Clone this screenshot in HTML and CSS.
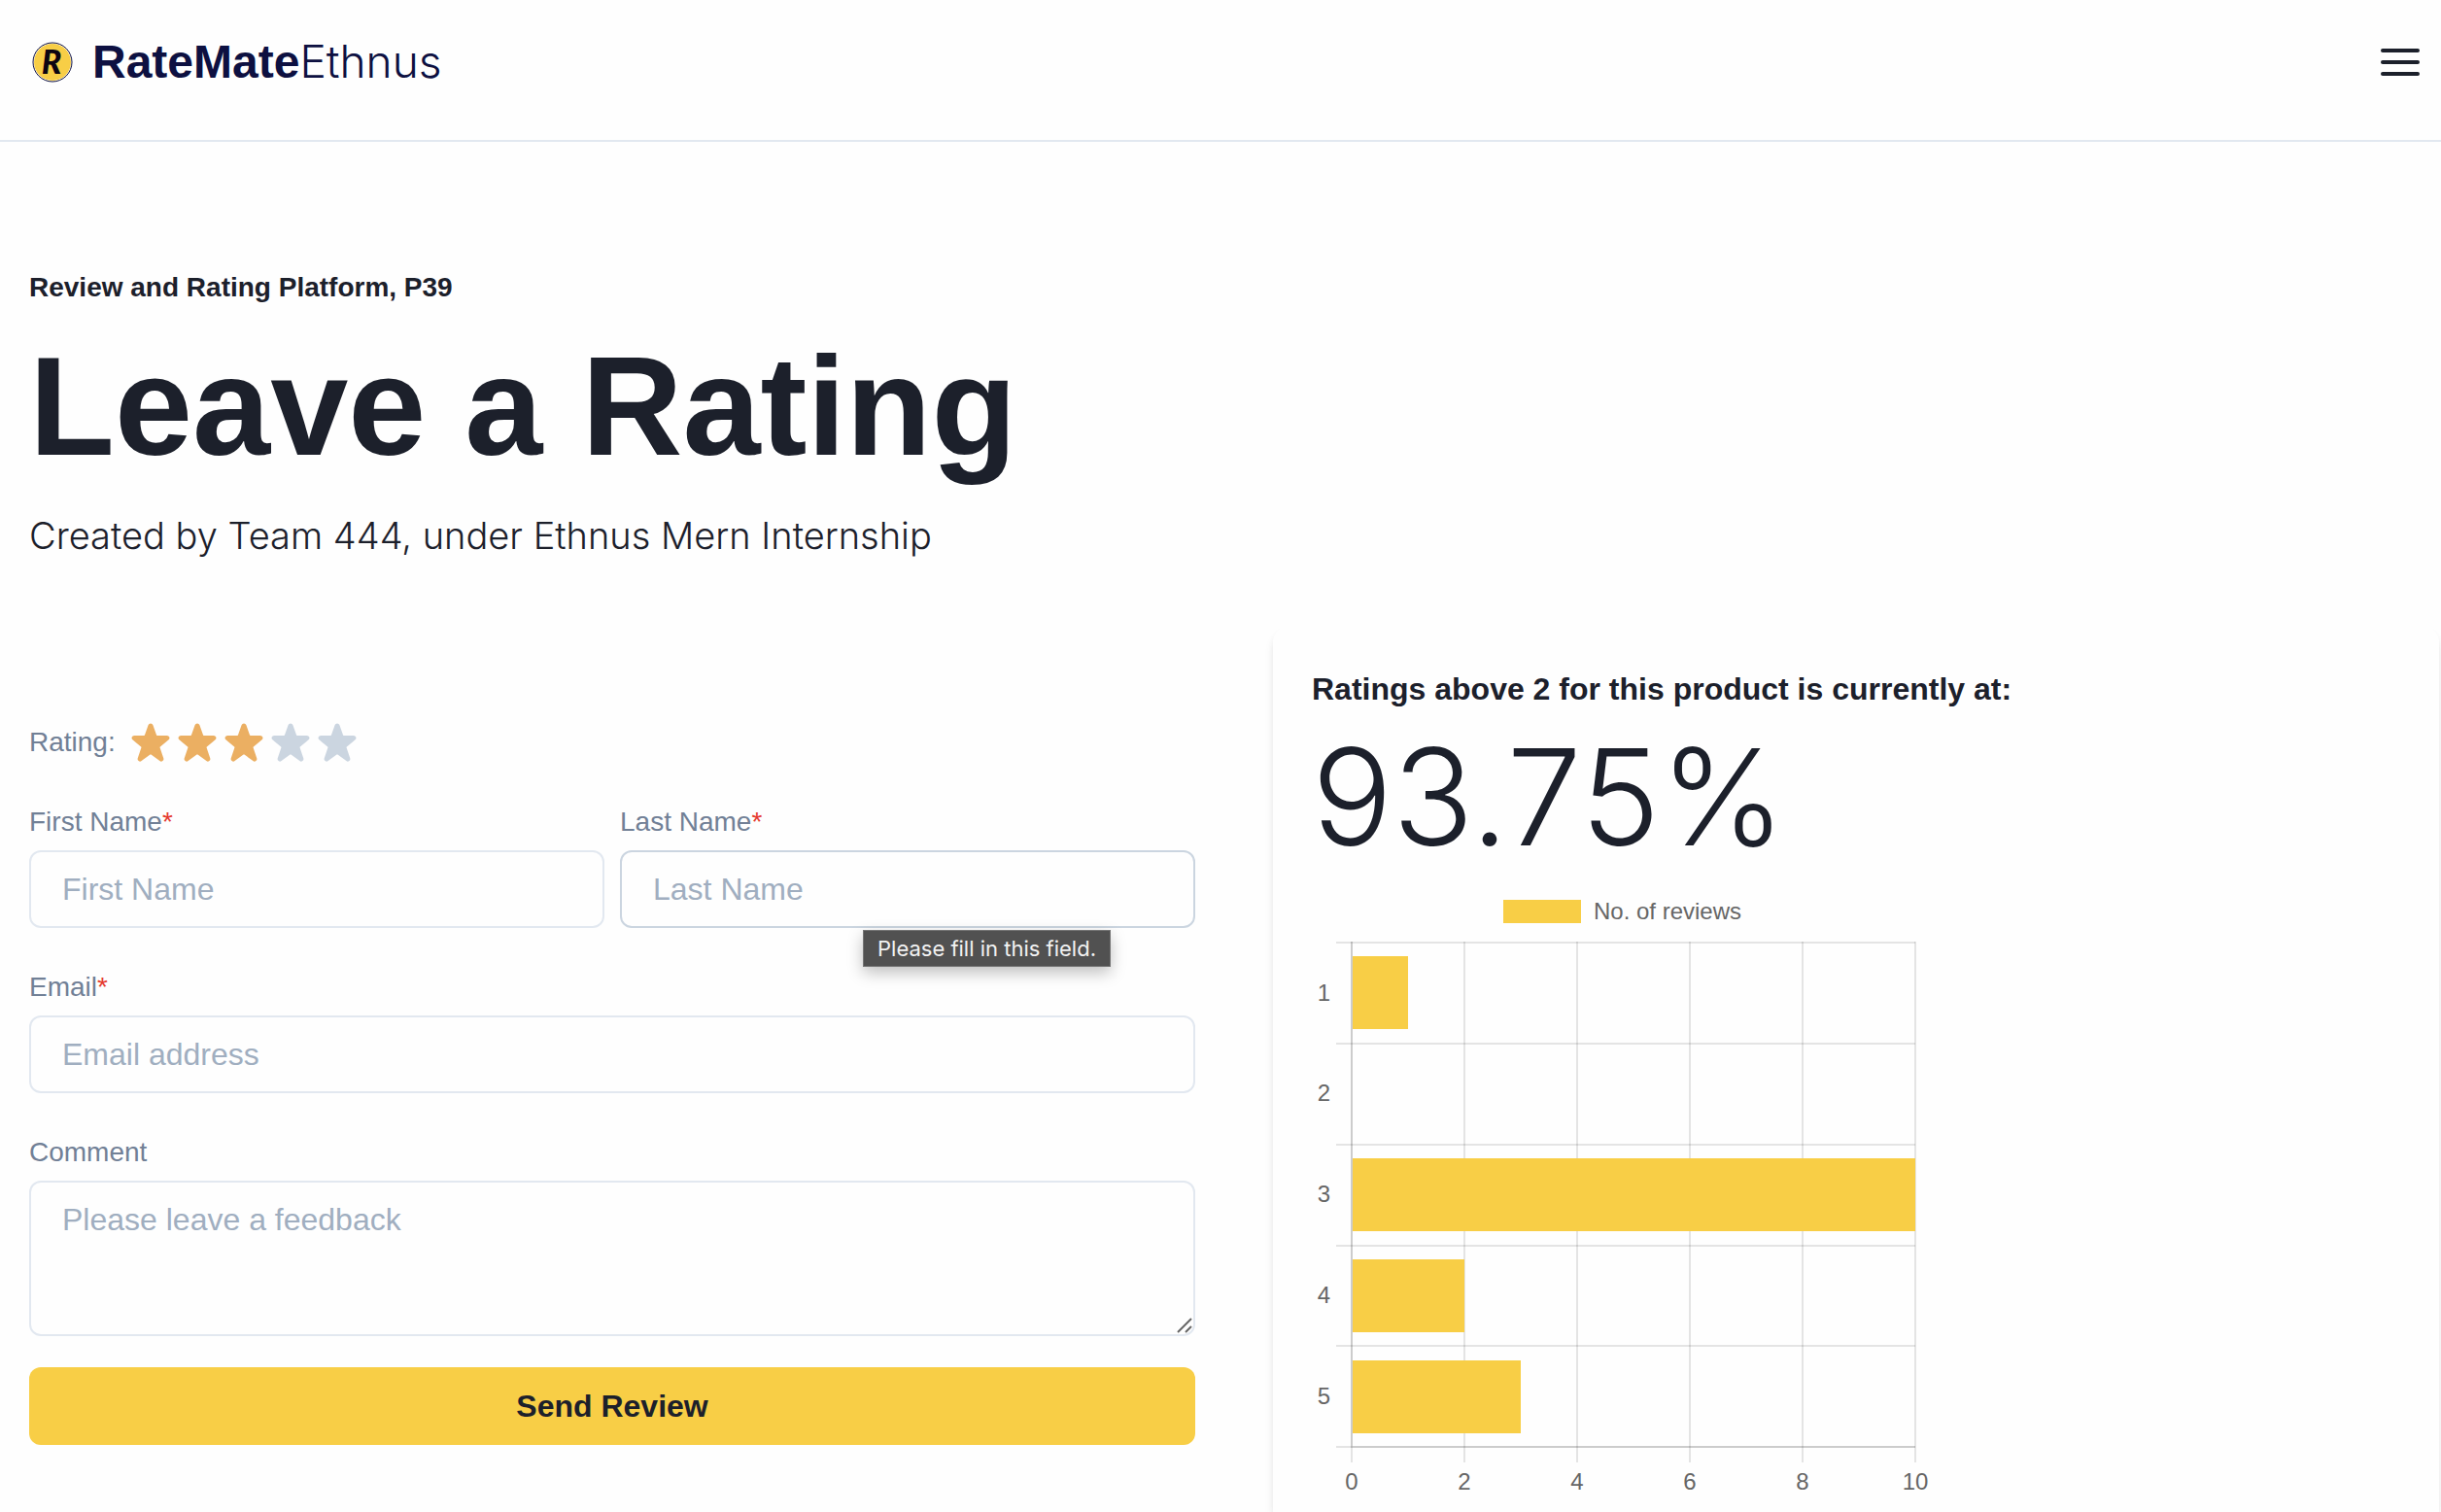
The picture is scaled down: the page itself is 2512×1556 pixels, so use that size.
FILE: index.html
```html
<!DOCTYPE html>
<html lang="en">
<head>
<meta charset="utf-8">
<title>RateMate Ethnus</title>
<meta name="viewport" content="width=device-width, initial-scale=1">
<link rel="stylesheet" href="styles.css">
</head>
<body>
<header class="site-header">
  <a class="brand" href="#">
    <svg class="brand-mark" viewBox="0 0 42 42" aria-hidden="true">
      <circle class="brand-disc" cx="21" cy="21" r="19"/>
      <circle class="brand-ring" cx="21" cy="21" r="20"/>
      <text class="brand-letter" x="20" y="33" text-anchor="middle">R</text>
    </svg>
    <span class="brand-name"><b>RateMate</b><span class="light">Ethnus</span></span>
  </a>
  <button class="menu-button" type="button" aria-label="Open menu">
    <svg viewBox="0 0 40 28" aria-hidden="true">
      <rect width="40" height="4" rx="2"/>
      <rect y="12" width="40" height="4" rx="2"/>
      <rect y="24" width="40" height="4" rx="2"/>
    </svg>
  </button>
</header>

<main>
  <section class="hero">
    <p class="eyebrow">Review and Rating Platform, P39</p>
    <h1>Leave a Rating</h1>
    <p class="tagline light">Created by Team 444, under Ethnus Mern Internship</p>
  </section>

  <div class="columns">
    <form class="review-form">
      <svg class="sprite" aria-hidden="true">
        <symbol id="star" viewBox="0 0 24 24">
          <path d="M23.555,8.729a1.505,1.505,0,0,0-1.406-.98H16.062a.5.5,0,0,1-.472-.334L13.405,1.222a1.5,1.5,0,0,0-2.81,0l-.005.016L8.41,7.415a.5.5,0,0,1-.471.334H1.85A1.5,1.5,0,0,0,.887,10.4l5.184,4.3a.5.5,0,0,1,.155.543L4.048,21.774a1.5,1.5,0,0,0,2.31,1.684l5.346-3.92a.5.5,0,0,1,.591,0l5.344,3.919a1.5,1.5,0,0,0,2.312-1.683l-2.178-6.535a.5.5,0,0,1,.155-.543l5.194-4.306A1.5,1.5,0,0,0,23.555,8.729Z"/>
        </symbol>
      </svg>
      <div class="rating" role="radiogroup" aria-labelledby="rating-label">
        <span class="label" id="rating-label">Rating:</span>
        <div class="stars">
          <label class="star on"><input type="radio" name="rating" value="1" aria-label="1 star"><svg><use href="#star"/></svg></label>
          <label class="star on"><input type="radio" name="rating" value="2" aria-label="2 stars"><svg><use href="#star"/></svg></label>
          <label class="star on"><input type="radio" name="rating" value="3" aria-label="3 stars" checked><svg><use href="#star"/></svg></label>
          <label class="star"><input type="radio" name="rating" value="4" aria-label="4 stars"><svg><use href="#star"/></svg></label>
          <label class="star"><input type="radio" name="rating" value="5" aria-label="5 stars"><svg><use href="#star"/></svg></label>
        </div>
      </div>

      <div class="name-row">
        <div class="field">
          <label class="label" for="first">First Name<span class="required">*</span></label>
          <input class="control" id="first" type="text" placeholder="First Name" required>
        </div>
        <div class="field">
          <label class="label" for="last">Last Name<span class="required">*</span></label>
          <input class="control hovered" id="last" type="text" placeholder="Last Name" required>
          <span class="tooltip" role="tooltip">Please fill in this field.</span>
        </div>
      </div>

      <div class="field">
        <label class="label" for="email">Email<span class="required">*</span></label>
        <input class="control" id="email" type="email" placeholder="Email address" required>
      </div>

      <div class="field">
        <label class="label" for="comment">Comment</label>
        <textarea class="control" id="comment" placeholder="Please leave a feedback"></textarea>
        <svg class="grip" viewBox="0 0 16 16" aria-hidden="true"><path d="M1 15 15 1M9 15 15 9"/></svg>
      </div>

      <button class="submit" type="submit">Send Review</button>
    </form>

    <section class="panel">
      <h2>Ratings above 2 for this product is currently at:</h2>
      <p class="score light">93.75%</p>
      <svg class="chart" viewBox="0 0 640 640" role="img" aria-label="Number of reviews for each rating">
        <g class="grid">
          <path d="M25 64H621M25 168H621M25 272H621M25 376H621M25 479H621M25 583H621"/>
          <path d="M41 63V599M157 63V599M273 63V599M389 63V599M505 63V599M621 63V599"/>
          <path d="M41 63V584M41 583H621"/>
        </g>
        <g class="bars">
          <rect x="197" y="20" width="80" height="24"/>
          <rect x="42" y="78" width="57" height="75"/>
          <rect x="42" y="286" width="579" height="75"/>
          <rect x="42" y="390" width="115" height="75"/>
          <rect x="42" y="494" width="173" height="75"/>
        </g>
        <g class="ticks">
          <text x="290" y="40">No. of reviews</text>
          <g text-anchor="end">
            <text x="19" y="124">1</text>
            <text x="19" y="227">2</text>
            <text x="19" y="331">3</text>
            <text x="19" y="435">4</text>
            <text x="19" y="539">5</text>
          </g>
          <g text-anchor="middle">
            <text x="41" y="627">0</text>
            <text x="157" y="627">2</text>
            <text x="273" y="627">4</text>
            <text x="389" y="627">6</text>
            <text x="505" y="627">8</text>
            <text x="621" y="627">10</text>
          </g>
        </g>
      </svg>
    </section>
  </div>
</main>
</body>
</html>
```

FILE: styles.css
```css
:root {
  --ink: #1c202b;
  --navy: #0d1041;
  --muted: #718096;
  --placeholder: #a0aec0;
  --line: #e2e8f0;
  --line-strong: #cbd5e0;
  --yellow: #f8ce46;
  --orange: #ebaf62;
}

* {
  box-sizing: border-box;
}

body {
  display: flex;
  flex-direction: column;
  min-height: 100vh;
  margin: 0;
  background: #fefefe;
  color: var(--ink);
  font-family: "Liberation Sans", Arial, sans-serif;
  font-size: 32px;
}

h1,
h2,
p {
  margin: 0;
}

.light {
  font-family: Inter, "Liberation Sans", sans-serif;
  font-weight: 300;
}

/* Header */

.site-header {
  display: flex;
  align-items: flex-start;
  justify-content: space-between;
  height: 146px;
  padding: 32px 22px 0 33px;
  border-bottom: 2px solid var(--line);
}

.brand {
  display: flex;
  align-items: center;
  gap: 20px;
  color: var(--navy);
  font-size: 48px;
  line-height: 62px;
  text-decoration: none;
}

.brand .light {
  font-size: 46px;
}

.brand-mark {
  width: 42px;
  height: 42px;
  overflow: visible;
}

.brand-ring {
  fill: none;
  stroke: var(--navy);
  stroke-width: 1;
}

.brand-disc {
  fill: var(--yellow);
}

.brand-letter {
  fill: #0c0512;
  font: italic 900 34px Lato, sans-serif;
}

.menu-button {
  display: flex;
  align-items: center;
  height: 64px;
  padding: 0;
  border: 0;
  background: none;
}

.menu-button svg {
  width: 40px;
  height: 28px;
  fill: var(--ink);
}

/* Intro */

main {
  display: flex;
  flex: 1;
  flex-direction: column;
}

.hero {
  padding: 129px 30px 0;
}

.eyebrow {
  font-size: 28px;
  font-weight: 700;
  line-height: 42px;
}

h1 {
  margin-top: 16px;
  font-size: 144px;
  line-height: 172px;
}

.tagline {
  margin-top: 16px;
  font-size: 38px;
  line-height: 60px;
}

.columns {
  display: grid;
  flex: 1;
  grid-template-columns: 1fr 1fr;
  gap: 80px;
  margin-top: 64px;
  padding: 0 2px 0 30px;
}

/* Form */

.review-form {
  display: flex;
  flex-direction: column;
  gap: 40px;
  padding-top: 98px;
}

.sprite {
  display: none;
}

.rating {
  display: flex;
  align-items: center;
  gap: 16px;
}

.stars {
  display: flex;
  gap: 8px;
}

.star {
  display: grid;
  width: 40px;
  height: 40px;
  fill: var(--line-strong);
}

.star.on {
  fill: var(--orange);
}

.star input,
.star svg {
  grid-area: 1 / 1;
  width: 40px;
  height: 40px;
  margin: 0;
}

.star input {
  appearance: none;
}

.label {
  color: var(--muted);
  font-size: 28px;
  line-height: 42px;
}

.required {
  color: #e53a30;
}

.name-row {
  display: grid;
  grid-template-columns: 1fr 1fr;
  gap: 16px;
}

.field {
  position: relative;
  display: flex;
  flex-direction: column;
  gap: 8px;
}

.control {
  width: 100%;
  height: 80px;
  padding: 0 32px;
  border: 2px solid var(--line);
  border-radius: 12px;
  outline: 0;
  background: none;
  color: var(--ink);
  font: inherit;
}

.control::placeholder {
  color: var(--placeholder);
}

.control.hovered {
  border-color: var(--line-strong);
}

textarea.control {
  display: block;
  height: 160px;
  padding: 16px 32px;
  line-height: 44px;
  resize: none;
}

.grip {
  position: absolute;
  right: 3px;
  bottom: 3px;
  width: 16px;
  height: 16px;
  fill: none;
  stroke: #666;
  stroke-width: 2;
}

.tooltip {
  position: absolute;
  top: 132px;
  right: 87px;
  padding: 0 14px;
  border: 1px solid #757575;
  background: #515151;
  box-shadow: 0 6px 16px rgba(0, 0, 0, 0.25);
  color: #f2f2f2;
  font-family: Inter, sans-serif;
  font-size: 22px;
  line-height: 36px;
  white-space: nowrap;
}

.submit {
  height: 80px;
  margin-top: -8px;
  border: 0;
  border-radius: 12px;
  background: var(--yellow);
  color: var(--ink);
  font: inherit;
  font-weight: 700;
}

/* Results */

.panel {
  padding: 40px 40px 8px;
  border-radius: 16px 16px 0 0;
  box-shadow: 0 8px 12px -2px rgba(0, 0, 0, 0.1), 0 4px 8px -2px rgba(0, 0, 0, 0.06);
}

h2 {
  font-size: 32px;
  line-height: 48px;
}

.score {
  font-size: 138px;
  line-height: 173px;
}

.chart {
  display: block;
  width: 640px;
  max-width: 100%;
}

.grid {
  fill: none;
  stroke: rgba(0, 0, 0, 0.1);
  stroke-width: 2;
}

.bars {
  fill: var(--yellow);
}

.ticks {
  fill: #666;
  font-size: 24px;
}
```
